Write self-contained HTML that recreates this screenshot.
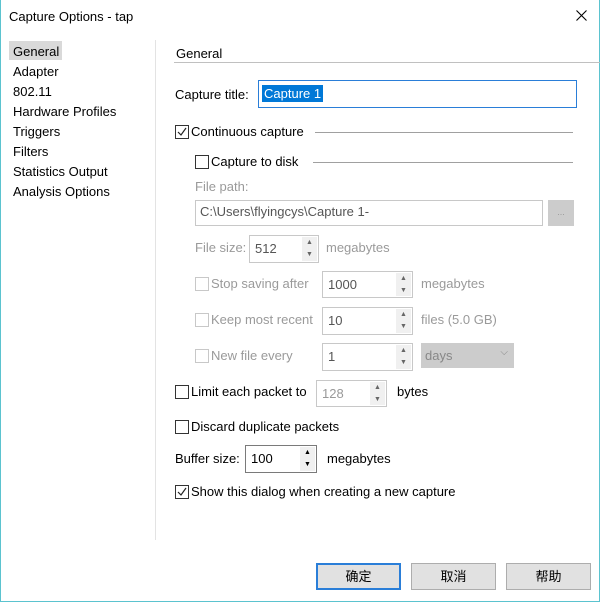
<!DOCTYPE html>
<html><head><meta charset="utf-8"><style>
body{margin:0;width:600px;height:602px;background:#fff;font-family:"Liberation Sans","Noto Sans CJK SC",sans-serif;font-size:13px;color:#000;position:relative;overflow:hidden}
.a{position:absolute;white-space:nowrap}
.g{color:#9a9a9a}
.cb{position:absolute;width:12px;height:12px;border:1px solid #333;background:#fff}
.cb.d{border-color:#c8c8c8}
.cb svg{position:absolute;left:0;top:0}
.inp{position:absolute;border:1px solid #c8c8c8;background:#fff;box-sizing:border-box;padding:3px 4px;font-size:13px}
.sp{position:absolute;border:1px solid #c8c8c8;box-sizing:border-box;background:#fff}
.sp .v{position:absolute;left:5px;top:5px}
.sp .ar{position:absolute;right:1px;top:1px;bottom:1px;width:15px;background:#f0f0f0;font-size:7px;color:#666;text-align:center;line-height:12px}
.line{position:absolute;height:1px;background:#a0a0a0}
.btn{position:absolute;width:85px;height:27px;box-sizing:border-box;border:1px solid #adadad;background:#e1e1e1;text-align:center;line-height:25px;font-size:13px}
</style></head><body>
<div style="position:absolute;left:0;top:0;width:600px;height:602px;box-sizing:border-box;border:1px solid #5bc3cf;border-top:none"></div>
<div class="a" style="left:9px;top:9px;font-size:13px">Capture Options - tap</div>
<svg style="position:absolute;left:576px;top:10px" width="11" height="11"><path d="M0.5 0.5L10.5 10.5M10.5 0.5L0.5 10.5" stroke="#000" stroke-width="1.1"/></svg>
<div class="a" style="left:9px;top:41px;width:53px;height:19px;background:#d9d9d9"></div>
<div class="a" style="left:13px;top:42px;line-height:20px">General<br>Adapter<br>802.11<br>Hardware Profiles<br>Triggers<br>Filters<br>Statistics Output<br>Analysis Options</div>
<div style="position:absolute;left:155px;top:40px;width:1px;height:500px;background:#e3e3e3"></div>
<div class="a" style="left:176px;top:46px">General</div>
<div class="line" style="left:174px;top:62px;width:426px;background:#c0c0c0"></div>
<div class="a" style="left:175px;top:87px">Capture title:</div>
<div class="inp" style="left:258px;top:80px;width:319px;height:28px;border-color:#2a7ed8;padding:5px 3px"><span style="background:#0078d7;color:#fff;padding:1px 2px">Capture 1</span></div>
<div class="cb" style="left:175px;top:125px"><svg width="12" height="12"><path d="M2 6l3 3 5-7" stroke="#222" fill="none" stroke-width="1.2"/></svg></div>
<div class="a" style="left:191px;top:124px">Continuous capture</div>
<div class="line" style="left:315px;top:132px;width:258px"></div>
<div class="cb" style="left:195px;top:155px"></div>
<div class="a" style="left:211px;top:154px">Capture to disk</div>
<div class="line" style="left:313px;top:162px;width:260px"></div>
<div class="a g" style="left:195px;top:179px">File path:</div>
<div class="inp" style="left:195px;top:200px;width:348px;height:26px;color:#555">C:\Users\flyingcys\Capture 1-</div>
<div class="a" style="left:548px;top:200px;width:26px;height:26px;background:#cccccc;color:#999;font-size:9px;text-align:center;line-height:24px">...</div>
<div class="a g" style="left:195px;top:240px">File size:</div>
<div class="sp" style="left:249px;top:235px;width:70px;height:28px"><span class="v" style="color:#555">512</span><div class="ar">▲<br>▼</div></div>
<div class="a g" style="left:326px;top:240px">megabytes</div>
<div class="cb d" style="left:195px;top:277px"></div><div class="a g" style="left:211px;top:276px">Stop saving after</div>
<div class="sp" style="left:322px;top:271px;width:91px;height:27px"><span class="v" style="color:#555">1000</span><div class="ar">▲<br>▼</div></div>
<div class="a g" style="left:421px;top:276px">megabytes</div>
<div class="cb d" style="left:195px;top:313px"></div><div class="a g" style="left:211px;top:312px">Keep most recent</div>
<div class="sp" style="left:322px;top:307px;width:91px;height:28px"><span class="v" style="color:#555">10</span><div class="ar">▲<br>▼</div></div>
<div class="a g" style="left:421px;top:312px">files (5.0 GB)</div>
<div class="cb d" style="left:195px;top:349px"></div><div class="a g" style="left:211px;top:348px">New file every</div>
<div class="sp" style="left:322px;top:343px;width:91px;height:28px"><span class="v" style="color:#555">1</span><div class="ar">▲<br>▼</div></div>
<div class="a" style="left:421px;top:343px;width:93px;height:25px;background:#cccccc;color:#888"><span style="position:absolute;left:4px;top:5px">days</span><span style="position:absolute;right:6px;top:4px;font-size:10px">⌵</span></div>
<div class="cb" style="left:175px;top:385px"></div><div class="a" style="left:191px;top:384px">Limit each packet to</div>
<div class="sp" style="left:316px;top:380px;width:71px;height:27px"><span class="v" style="color:#999">128</span><div class="ar">▲<br>▼</div></div>
<div class="a" style="left:397px;top:384px">bytes</div>
<div class="cb" style="left:175px;top:420px"></div><div class="a" style="left:191px;top:419px">Discard duplicate packets</div>
<div class="a" style="left:175px;top:451px">Buffer size:</div>
<div class="sp" style="left:245px;top:445px;width:72px;height:28px;border-color:#7a7a7a"><span class="v">100</span><div class="ar" style="color:#000">▲<br>▼</div></div>
<div class="a" style="left:327px;top:451px">megabytes</div>
<div class="cb" style="left:175px;top:485px"><svg width="12" height="12"><path d="M2 6l3 3 5-7" stroke="#222" fill="none" stroke-width="1.2"/></svg></div>
<div class="a" style="left:191px;top:484px">Show this dialog when creating a new capture</div>
<div class="btn" style="left:316px;top:563px;border:2px solid #2a7ed8;line-height:23px">确定</div>
<div class="btn" style="left:411px;top:563px">取消</div>
<div class="btn" style="left:506px;top:563px">帮助</div>
</body></html>
